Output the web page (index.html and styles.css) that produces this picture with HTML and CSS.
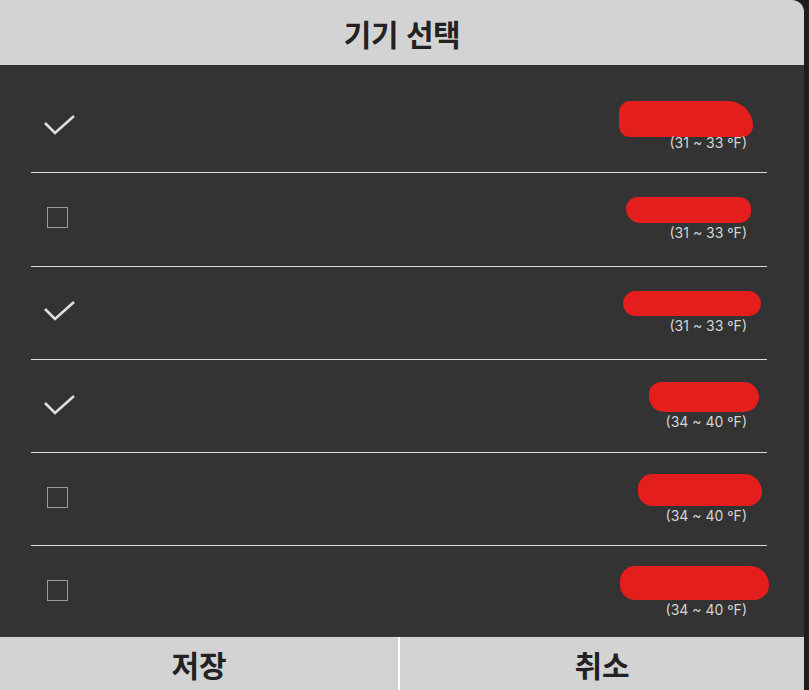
FILE: index.html
```html
<!DOCTYPE html>
<html lang="ko">
<head>
    <meta charset="UTF-8">
    <meta name="viewport" content="width=device-width, initial-scale=1.0">
    <title>기기 선택</title>
    <link rel="stylesheet" href="styles.css">
</head>
<body>
    <div class="dialog">
        <div class="dialog-title">기기 선택</div>

        <div class="device-list">
            <div class="device-row">
                <svg class="check" viewBox="0 0 32 22"><path d="M1 9 L11 19 L30 2"/></svg>
                <div class="device-info">
                    <span class="name-mark mark-1"></span>
                    <span class="range">(31 ~ 33 ºF)</span>
                </div>
            </div>
            <div class="device-row">
                <span class="box"></span>
                <div class="device-info">
                    <span class="name-mark mark-2"></span>
                    <span class="range">(31 ~ 33 ºF)</span>
                </div>
            </div>
            <div class="device-row">
                <svg class="check" viewBox="0 0 32 22"><path d="M1 9 L11 19 L30 2"/></svg>
                <div class="device-info">
                    <span class="name-mark mark-3"></span>
                    <span class="range">(31 ~ 33 ºF)</span>
                </div>
            </div>
            <div class="device-row">
                <svg class="check" viewBox="0 0 32 22"><path d="M1 9 L11 19 L30 2"/></svg>
                <div class="device-info">
                    <span class="name-mark mark-4"></span>
                    <span class="range">(34 ~ 40 ºF)</span>
                </div>
            </div>
            <div class="device-row">
                <span class="box"></span>
                <div class="device-info">
                    <span class="name-mark mark-5"></span>
                    <span class="range">(34 ~ 40 ºF)</span>
                </div>
            </div>
            <div class="device-row">
                <span class="box"></span>
                <div class="device-info">
                    <span class="name-mark mark-6"></span>
                    <span class="range">(34 ~ 40 ºF)</span>
                </div>
            </div>
        </div>

        <div class="dialog-buttons">
            <button class="btn btn-save">저장</button>
            <button class="btn">취소</button>
        </div>
    </div>
</body>
</html>
```

FILE: styles.css
```css
body {
    margin: 0;
    background: #1e1e1e;
    font-family: "Noto Sans CJK KR", "Noto Sans", sans-serif;
    height: 690px;
    overflow: hidden;
}
.dialog {
    width: 804px;
    height: 690px;
    background: #333333;
    border-top-right-radius: 12px;
    overflow: hidden;
    display: flex;
    flex-direction: column;
}
.dialog-title {
    height: 65px;
    flex: none;
    background: #d3d3d3;
    color: #222;
    font-size: 30px;
    font-weight: 700;
    display: flex;
    justify-content: center;
    align-items: center;
    letter-spacing: -0.5px;
}
.device-list {
    height: 556px;
    flex: none;
    padding-top: 15px;
    overflow: hidden;
}
.device-row {
    height: 92.3px;
    margin: 0 37px 0 31px;
    border-bottom: 1px solid #dcdcdc;
    display: flex;
    align-items: center;
    justify-content: space-between;
    padding: 0 20px 0 13px;
}
.device-row:last-child {
    border-bottom: none;
}
.check {
    width: 32px;
    height: 22px;
    margin-top: -3px;
}
.check path {
    fill: none;
    stroke: #dedede;
    stroke-width: 2.6;
}
.box {
    width: 19px;
    height: 19px;
    border: 1.5px solid #9a9a9a;
    margin-left: 3px;
    margin-top: -4px;
}
.device-info {
    display: flex;
    flex-direction: column;
    align-items: flex-end;
    margin-top: -1px;
}
/* red marker strokes over the device names */
.name-mark {
    display: block;
    height: 26px;
    background: #e41d1d;
    border-radius: 14px;
    margin-bottom: 1px;
}
.mark-1 { width: 134px; height: 36px; border-radius: 18px 40px 18px 18px; margin-right: -6px; margin-bottom: -3px; }
.mark-2 { width: 125px; border-radius: 13px 13px 13px 16px; margin-right: -4px; }
.mark-3 { width: 138px; height: 25px; margin-right: -14px; }
.mark-4 { width: 110px; height: 30px; border-radius: 12px 15px 15px 15px; margin-right: -12px; }
.mark-5 { width: 124px; height: 32px; border-radius: 16px 20px 16px 16px; margin-right: -15px; }
.mark-6 { width: 149px; height: 34px; border-radius: 16px 20px 16px 16px; margin-right: -22px; }
.range {
    font-family: Inter, "Noto Sans", sans-serif;
    font-size: 14px;
    color: #d4d4d4;
    line-height: 17px;
}
.dialog-buttons {
    flex: 1;
    display: flex;
    gap: 2px;
    background: #ffffff;
    border-top: 1px solid #3a3a3a;
}
.btn {
    flex: 1;
    border: none;
    background: #d3d3d3;
    color: #222;
    font-family: "Noto Sans CJK KR", "Noto Sans", sans-serif;
    font-size: 30px;
    font-weight: 700;
    padding: 0;
    display: flex;
    justify-content: center;
    align-items: center;
}
.btn-save {
    flex: none;
    width: 398px;
}
```
